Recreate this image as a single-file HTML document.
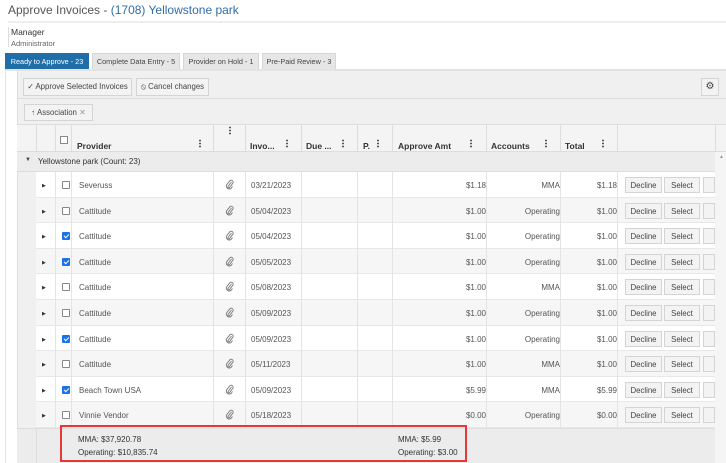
<!DOCTYPE html>
<html><head><style>
*{box-sizing:border-box;margin:0;padding:0}
body{width:726px;height:463px;overflow:hidden;background:#fff;font-family:"Liberation Sans",sans-serif;color:#444;position:relative}
.a{position:absolute}
.tab{position:absolute;top:53px;height:16px;font-size:7.3px;line-height:16px;text-align:center;background:#e6e6e6;border:1px solid #d6d6d6;border-bottom:none;color:#444;white-space:nowrap;overflow:hidden}
.btn{position:absolute;background:#f3f3f3;border:1px solid #d4d4d4;font-size:7.8px;color:#444;line-height:16px;text-align:center;white-space:nowrap;overflow:hidden}
.v{position:absolute;width:1px;background:#ddd}
.row{position:absolute;left:36px;width:679px;height:25.6px;border-bottom:1px solid #e8e8e8}
.cell{position:absolute;font-size:8px;color:#555;top:9px;line-height:10px;white-space:nowrap}
.cb{position:absolute;width:8px;height:8px;border:1px solid #888;border-radius:1px;background:#fff;left:26px;top:9px}
.cb.on{background:#1a73e8;border-color:#1a73e8}
.cb.on:after{content:"";position:absolute;left:2px;top:0px;width:2px;height:4px;border:solid #fff;border-width:0 1.3px 1.3px 0;transform:rotate(45deg)}
.hd{position:absolute;font-size:8.5px;font-weight:bold;color:#333;top:141px;white-space:nowrap}
.dots{position:absolute;width:2px;height:9px;background:radial-gradient(circle,#555 0.9px,transparent 1px) 0 0/2px 3px repeat-y}
.clip{position:absolute;left:189px;top:7px}
</style></head><body>
<div class="a" style="left:8px;top:3px;font-size:12px;color:#555;white-space:nowrap">Approve Invoices - <span style="color:#2f6ea8">(1708) Yellowstone park</span></div>
<div class="a" style="left:8px;top:21px;width:718px;height:2px;background:#eee"></div>
<div class="a" style="left:8px;top:27px;width:1px;height:20px;background:#ddd"></div>
<div class="a" style="left:11px;top:27px;font-size:8.5px;color:#333">Manager</div>
<div class="a" style="left:11px;top:39px;font-size:7.5px;color:#666">Administrator</div>
<div class="tab" style="left:5px;width:84px;background:#1f6ea8;border-color:#1f6ea8;color:#fff">Ready to Approve - 23</div>
<div class="tab" style="left:92px;width:88px">Complete Data Entry - 5</div>
<div class="tab" style="left:183px;width:76px">Provider on Hold - 1</div>
<div class="tab" style="left:262px;width:74px">Pre-Paid Review - 3</div>
<div class="a" style="left:5px;top:69px;width:721px;height:2px;background:#e4e4e4"></div>
<div class="a" style="left:5px;top:71px;width:1px;height:392px;background:#e4e4e4"></div>
<div class="a" style="left:17px;top:71px;width:709px;height:392px;background:#f0f0f0;border-left:1px solid #ddd"></div>
<div class="a" style="left:17px;top:98px;width:709px;height:1px;background:#ddd"></div>
<div class="a" style="left:17px;top:124px;width:709px;height:1px;background:#ddd"></div>
<div class="btn" style="left:23px;top:78px;width:109px;height:18px">✓ Approve Selected Invoices</div>
<div class="btn" style="left:136px;top:78px;width:73px;height:18px">⦸ Cancel changes</div>
<div class="btn" style="left:701px;top:78px;width:18px;height:18px;font-size:10px">⚙</div>
<div class="btn" style="left:24px;top:104px;width:69px;height:17px">↑ Association <span style="color:#999">✕</span></div>
<div class="a" style="left:17px;top:125px;width:709px;height:27px;background:#f4f4f4;border-bottom:1px solid #ddd"></div>
<div class="v" style="left:36px;top:125px;height:27px"></div>
<div class="v" style="left:55px;top:125px;height:27px"></div>
<div class="v" style="left:71px;top:125px;height:27px"></div>
<div class="v" style="left:213px;top:125px;height:27px"></div>
<div class="v" style="left:245px;top:125px;height:27px"></div>
<div class="v" style="left:301px;top:125px;height:27px"></div>
<div class="v" style="left:357px;top:125px;height:27px"></div>
<div class="v" style="left:392px;top:125px;height:27px"></div>
<div class="v" style="left:486px;top:125px;height:27px"></div>
<div class="v" style="left:560px;top:125px;height:27px"></div>
<div class="v" style="left:617px;top:125px;height:27px"></div>
<div class="v" style="left:715px;top:125px;height:27px"></div>
<div class="a" style="left:60px;top:136px;width:8px;height:8px;border:1px solid #888;background:#fff"></div>
<div class="hd" style="left:77px">Provider</div>
<div class="hd" style="left:250px">Invo...</div>
<div class="hd" style="left:306px">Due ...</div>
<div class="hd" style="left:363px">P.</div>
<div class="hd" style="left:398px">Approve Amt</div>
<div class="hd" style="left:491px">Accounts</div>
<div class="hd" style="left:565px">Total</div>
<div class="dots" style="left:199px;top:139px"></div>
<div class="dots" style="left:229px;top:126px"></div>
<div class="dots" style="left:286px;top:139px"></div>
<div class="dots" style="left:342px;top:139px"></div>
<div class="dots" style="left:377px;top:139px"></div>
<div class="dots" style="left:470px;top:139px"></div>
<div class="dots" style="left:545px;top:139px"></div>
<div class="dots" style="left:602px;top:139px"></div>
<div class="a" style="left:17px;top:152px;width:698px;height:20px;background:#ececec;border-bottom:1px solid #ddd"></div>
<div class="a" style="left:25px;top:157px;font-size:6px">▼</div>
<div class="a" style="left:38px;top:157px;font-size:8px;color:#333">Yellowstone park (Count: 23)</div>
<div class="a" style="left:715px;top:152px;width:11px;height:311px;background:#f5f5f5"></div>
<div class="a" style="left:719px;top:154px;font-size:5px;color:#999">▲</div>
<div id="rows"></div>
<div class="a" style="left:17px;top:428px;width:698px;height:35px;background:#ececec;border-top:1px solid #ddd"></div>
<div class="v" style="left:36px;top:428px;height:35px;background:#ddd"></div>
<div class="a" style="left:60px;top:425px;width:407px;height:37px;border:2px solid #e53935"></div>
<div class="a" style="left:78px;top:433px;font-size:8px;color:#333;line-height:13px">MMA: $37,920.78<br>Operating: $10,835.74</div>
<div class="a" style="left:398px;top:433px;font-size:8px;color:#333;line-height:13px">MMA: $5.99<br>Operating: $3.00</div>
<script>
var d=[["Severuss","03/21/2023","$1.18","MMA",0],["Cattitude","05/04/2023","$1.00","Operating",0],["Cattitude","05/04/2023","$1.00","Operating",1],["Cattitude","05/05/2023","$1.00","Operating",1],["Cattitude","05/08/2023","$1.00","MMA",0],["Cattitude","05/09/2023","$1.00","Operating",0],["Cattitude","05/09/2023","$1.00","Operating",1],["Cattitude","05/11/2023","$1.00","MMA",0],["Beach Town USA","05/09/2023","$5.99","MMA",1],["Vinnie Vendor","05/18/2023","$0.00","Operating",0]];
var clip='<svg class="clip" width="9" height="11" viewBox="0 0 9 11"><path d="M6.5 3 L3 7.5 a1 1 0 0 0 1.5 1.2 L8 4 a2 2 0 0 0 -3 -2.4 L1.5 6 a3 3 0 0 0 4.5 3.5 L7.5 7.5" fill="none" stroke="#777" stroke-width="0.9"/></svg>';
var h="";
d.forEach(function(r,i){var y=172+i*25.6;
h+='<div class="row" style="top:'+y+'px;background:'+(i%2?'#f6f6f6':'#fff')+'">'+
'<div class="cell" style="left:6px;font-size:5px;color:#333">▶</div>'+
'<div class="cb'+(r[4]?' on':'')+'"></div>'+
'<div class="cell" style="left:43px">'+r[0]+'</div>'+clip+
'<div class="cell" style="left:215px">'+r[1]+'</div>'+
'<div class="cell" style="right:229px">'+r[2]+'</div>'+
'<div class="cell" style="right:155px">'+r[3]+'</div>'+
'<div class="cell" style="right:98px">'+r[2]+'</div>'+
'<div class="btn" style="left:589px;top:5px;width:37px;height:16px;font-size:7.8px">Decline</div>'+
'<div class="btn" style="left:628px;top:5px;width:36px;height:16px;font-size:7.8px">Select</div>'+
'<div class="btn" style="left:667px;top:5px;width:12px;height:16px"></div>';
[19,35,177,209,265,321,356,450,524,581].forEach(function(x){h+='<div class="v" style="left:'+x+'px;top:0;height:25.6px;background:#e4e4e4"></div>'});
h+='</div>';});
document.getElementById("rows").innerHTML=h;
</script>
</body></html>
